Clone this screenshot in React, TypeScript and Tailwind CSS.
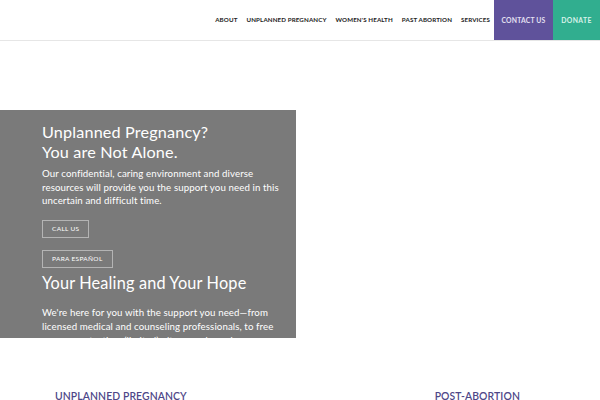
export default function App() {
  const nav = ["About", "Unplanned Pregnancy", "Women's Health", "Past Abortion", "Services"];
  return (
    <div className="h-[400px] w-[600px] overflow-hidden bg-white font-['Lato',sans-serif]">
      <header className="flex h-[41px] items-stretch justify-end border-b border-[#e6e6e6]">
        <nav className="flex items-center gap-[9px] pr-[4px]">
          {nav.map((n) => (
            <a key={n} className="text-[6.2px] font-bold uppercase tracking-[0.02em] text-[#222]">
              {n}
            </a>
          ))}
        </nav>
        <a className="flex w-[59px] items-center justify-center bg-[#5f529b] text-[6.8px] font-bold uppercase tracking-[0.03em] text-[#e4e0f2]">
          Contact Us
        </a>
        <a className="flex w-[47px] items-center justify-center bg-[#31ae8f] text-[6.8px] font-bold uppercase tracking-[0.06em] text-[#d9f2ea]">
          Donate
        </a>
      </header>

      <section className="mt-[69px] h-[228px] w-[296px] overflow-hidden bg-[#7a7a7a] pl-[42px] pr-[12px] pt-[12px] text-white">
        <h1 className="text-[16.2px] leading-[20px] tracking-[0.01em]">
          Unplanned Pregnancy?
          <br />
          You are Not Alone.
        </h1>
        <p className="mt-[5px] text-[9.7px] leading-[13.5px] tracking-[0.01em]">
          Our confidential, caring environment and diverse resources will provide you the support you need in this uncertain and difficult time.
        </p>
        <button className="mt-[12px] block h-[18px] border border-[#b4b4b4] px-[9px] text-[6.5px] uppercase tracking-[0.05em] text-white">
          Call Us
        </button>
        <button className="mt-[12px] block h-[18px] border border-[#b4b4b4] px-[9px] text-[6.5px] uppercase tracking-[0.05em] text-white">
          Para Español
        </button>
        <h2 className="mt-[5px] text-[16.3px] leading-[20px] tracking-[0.01em]">Your Healing and Your Hope</h2>
        <p className="mt-[12px] text-[9.7px] leading-[14px] tracking-[0.01em]">
          We're here for you with the support you need—from licensed medical and counseling professionals, to free pregnancy testing, (limited) ultrasounds, and
        </p>
      </section>

      <div className="mt-[51px] flex">
        <h3 className="ml-[55px] text-[10.4px] font-semibold uppercase tracking-[0.01em] text-[#4e4788]">
          Unplanned Pregnancy
        </h3>
        <h3 className="ml-auto mr-[80px] text-[10.4px] font-semibold uppercase tracking-[0.01em] text-[#4e4788]">
          Post-Abortion
        </h3>
      </div>
    </div>
  );
}
